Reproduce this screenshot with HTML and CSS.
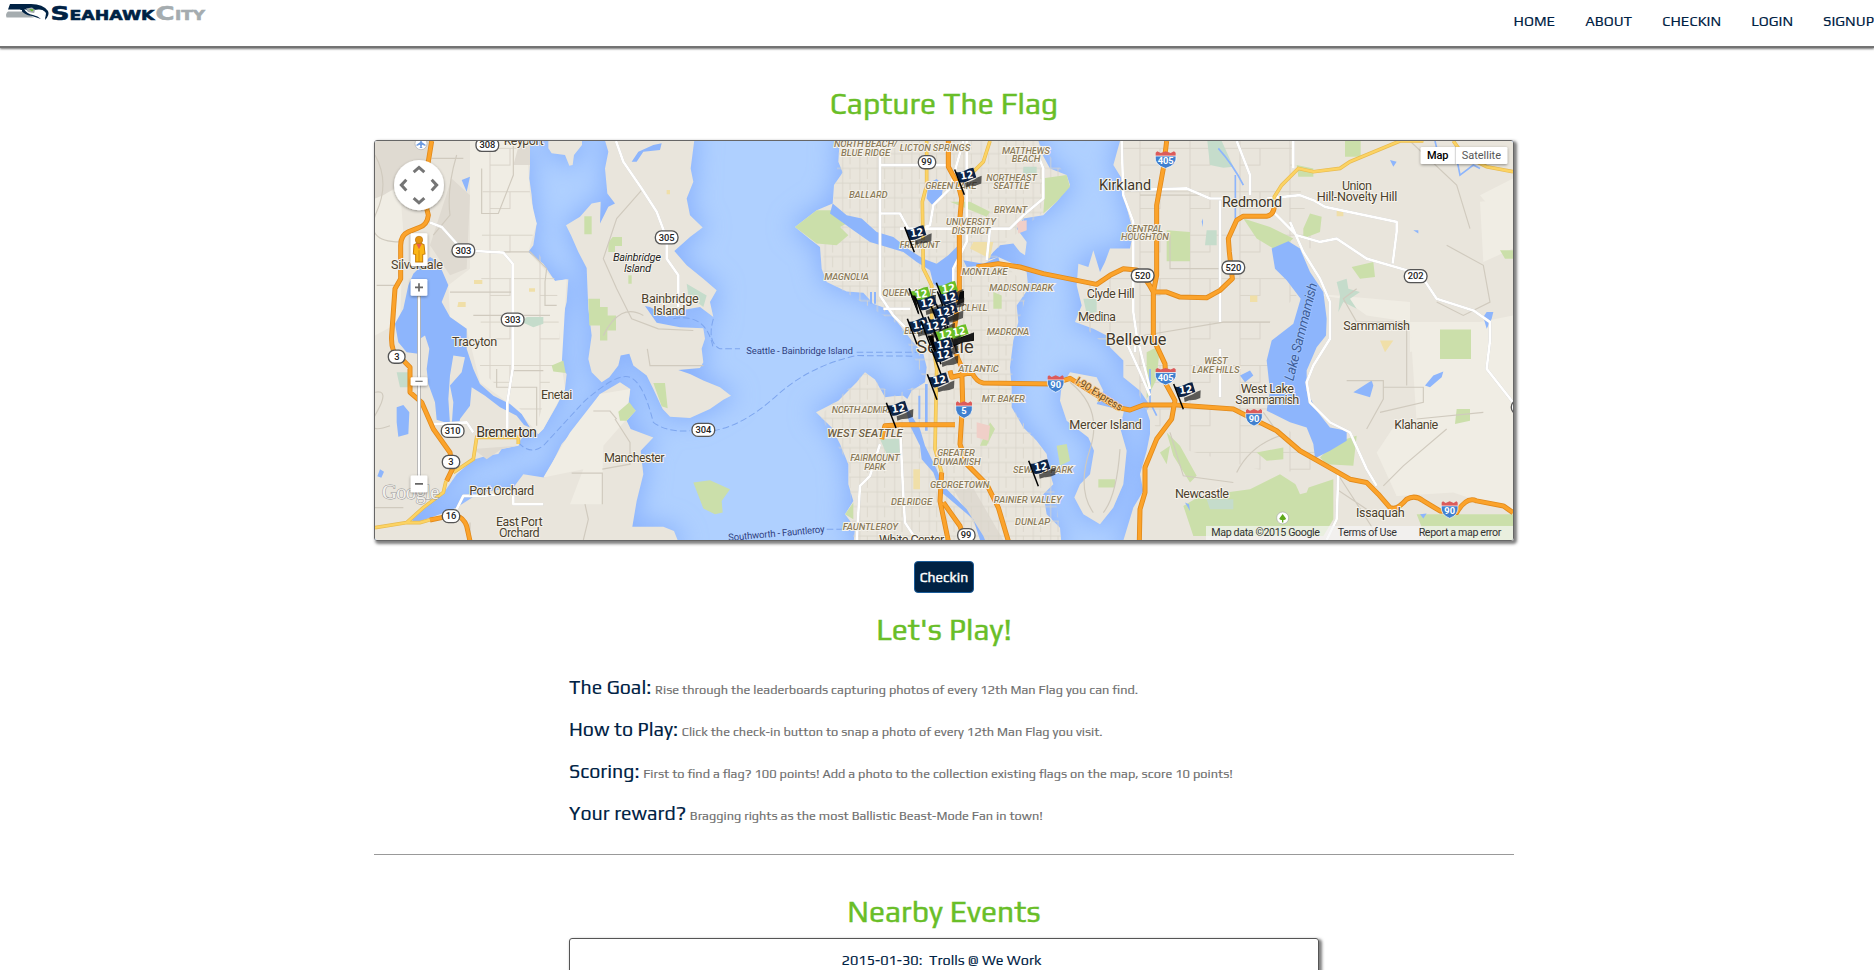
FILE: index.html
```html
<!DOCTYPE html>
<html lang="en">
<head>
<meta charset="utf-8">
<title>SeahawkCity</title>
<link rel="stylesheet" href="styles.css">
</head>
<body>
<header class="topbar">
  <a class="brand">
    <svg width="206" height="24" viewBox="0 0 206 24">
      <path d="M10 4H31Q43 4 48 11 50 15 45 20 46 15 43 14L28 11 26 9.500H8Z" fill="#002244"/>
      <path d="M8 11.500H22L28 14 34 17.500H6.500Q5 14 8 11.500Z" fill="#a5acaf"/>
      <path d="M20 9Q24 15 32 16L41 19Q38 16 33 15 27 14 24 9Z" fill="#002244"/>
      <path d="M9 10.500H22" stroke="#fff"/>
      <path d="M26 8.500L32 7.500 36 10.500 34 13 28 12Z" fill="#a5acaf"/>
      <path d="M29 9L34 9.500 32 11.500Z" fill="#69be28"/>
      <path d="M35 9.500Q43 8 46 13L45.500 17Q43 13.500 37 14.500L34 14Z" fill="#fff"/>
      <path d="M35 9.200Q43 7.500 46.500 12" fill="none" stroke="#002244" stroke-width="1.200"/>
      <text class="wordmark" y="20"><tspan x="60" class="wm-big" textLength="19" lengthAdjust="spacingAndGlyphs">S</tspan><tspan x="112" class="wm-small" textLength="85" lengthAdjust="spacingAndGlyphs">EAHAWK</tspan></text>
      <text class="wordmark wm-gray" y="20"><tspan x="165" class="wm-big" textLength="19" lengthAdjust="spacingAndGlyphs">C</tspan><tspan x="190" class="wm-small" textLength="30" lengthAdjust="spacingAndGlyphs">ITY</tspan></text>
    </svg>
  </a>
  <nav class="menu"><a>HOME</a><a>ABOUT</a><a>CHECKIN</a><a>LOGIN</a><a>SIGNUP</a></nav>
</header>

<main class="container">
  <h1 class="title title-map">Capture The Flag</h1>
  <div class="map">
    <svg class="map-canvas" viewBox="15 18 3414 1194" preserveAspectRatio="none">
      <defs>
        <filter id="soft" x="-5%" y="-5%" width="110%" height="110%"><feGaussianBlur stdDeviation="36"/></filter>
        <filter id="drop" x="-30%" y="-30%" width="160%" height="160%"><feDropShadow dx="0" dy="3" stdDeviation="4" flood-opacity=".4"/></filter>
        <pattern id="grid" width="52" height="44" patternUnits="userSpaceOnUse"><path d="M0 12H52M14 0V44M36 12V44" fill="none" stroke="#dad5ca" stroke-width="2.500"/></pattern>
        <pattern id="grid2" width="150" height="130" patternUnits="userSpaceOnUse"><path d="M0 40H150M60 0V130M60 90H120V40" fill="none" stroke="#d9d4c9" stroke-width="3"/></pattern>
        <g id="land">
          <path d="M0 0H380L395 35 430 45 470 45 480 90 478 130 485 180 490 240 500 265 490 330 475 350 520 385 555 437 595 432 590 500 580 540 575 640 565 690 590 715 585 760 560 810 520 880 505 895 475 880 450 915 446 930 395 940 385 955 350 960 310 972 260 1015 218 1075 160 1115 118 1150 140 1160 210 1135 260 1115 330 1070 430 1055 460 1015 522 1025 545 985 575 925 610 885 650 835 690 775 750 740 781 760 775 805 797 825 770 855 782 880 850 905 812 945 820 1015 800 1095 787 1172 880 1172 912 1185 930 1230H0Z"/>
          <path d="M535 0V40L545 55 585 60 598 92 608 90 612 60 636 30V0Z"/>
          <path d="M700 0L715 50 705 100 712 175 735 205 715 215 690 265 692 200 665 205 630 245 588 270 603 300 625 350 650 398 652 450 655 520 665 600 655 670 665 710 695 740 718 725 745 690 752 660 778 655 790 690 830 720 850 760 878 820 900 843 960 847 1020 820 1060 792 1083 780 1050 755 1000 735 960 715 925 703 990 697 1000 680 995 640 1005 610 1000 578 930 575 860 562 825 512 840 515 890 545 930 525 990 515 1030 545 1020 500 1040 465 1000 430 950 390 913 347 960 305 998 277 960 240 950 190 970 140 962 100 975 0Z"/>
          <path d="M1410 0L1405 80 1418 112 1392 150 1388 205 1340 225 1275 275 1320 312 1350 335 1355 400 1370 440 1430 468 1480 472 1510 505 1550 520 1590 570 1625 615 1660 655 1670 695 1665 740 1625 765 1612 790 1600 780 1568 782 1545 785 1515 732 1485 710 1460 740 1405 795 1338 830 1385 875 1410 925 1435 985 1435 1045 1450 1095 1425 1135 1455 1175 1450 1230H2075L2070 1175 2030 1135 2020 1075 2050 1045 2040 1015 2030 955 2000 915 1960 875 1925 815 1925 755 1920 695 1930 615 1945 560 1940 510 1975 460 1970 410 1930 385 1885 365 1850 375 1870 350 1890 330 1930 325 1950 350 1965 360 1970 320 1940 280 1960 250 2020 240 2060 200 2100 150 2090 120 2040 100 2018 60 2000 0Z"/>
          <path d="M2255 0L2230 90 2255 130 2260 180 2290 290 2280 340 2220 340 2205 380 2190 410 2170 345 2155 395 2125 385 2120 450 2135 510 2115 560 2170 580 2210 600 2220 635 2260 675 2260 725 2310 765 2340 810 2330 825 2340 855 2340 895 2330 945 2310 1015 2320 1065 2290 1115 2255 1230H3450V0Z"/>
          <path d="M2075 750L2100 710 2180 725 2200 765 2180 805 2262 825 2250 875 2270 945 2260 1045 2230 1115 2190 1165 2140 1135 2113 1085 2130 1045 2160 1015 2172 945 2155 905 2090 855 2070 795Z"/>
        </g>
      </defs>
      <rect width="3450" height="1240" fill="#afd0ff"/>
      <use href="#land" fill="#8ab2fd" stroke="#8ab2fd" stroke-width="22" filter="url(#soft)"/>
      <use href="#land" fill="#e9e5dc"/>

      <!-- lighter rural areas -->
      <g fill="#f0ede4">
        <path d="M300 18H470L480 180 500 265 475 350 555 437 590 432 575 690 585 760 520 880 505 895 440 820 330 740 290 580 240 545 235 450 300 400Z"/>
        <path d="M15 180L90 160 100 290 90 560 15 600ZM690 775L780 760 770 850 700 930 695 1105 600 1105 640 1000 520 1025 600 890Z"/>
        <path d="M2780 470L2920 490 2990 540 3120 560 3140 730 3210 850 3080 860 3020 950 3080 1080 3250 1070 3429 1130V300L3330 180 3429 130V540L3330 560 3120 650 3120 500Z"/>
        <path d="M3120 560H3429V1130L3240 1060 3080 1080 3060 950 3140 860Z"/>
        <path d="M3330 200L3429 190V340L3340 380Z"/>
      </g>
      <g fill="#dfdad1">
        <path d="M15 18H190L170 100 40 180 15 190ZM245 130L300 180 290 400 240 420 180 330ZM310 940L440 930 395 940 350 970Z"/>
        <path d="M1750 1060L1800 1040 1900 1212 1840 1212ZM450 18H480V90H430Z"/>
      </g>
      <path d="M1410 18H2000L2090 120 2060 200 1870 350 1975 460 1930 615 1925 815 2030 955 2050 1045 2075 1212H1450L1435 985 1350 840 1485 710 1570 780 1665 740 1590 570 1360 430 1360 340 1390 200Z" fill="url(#grid)"/>
      <path d="M2255 18H2760L2830 340 2700 330 2780 480 2700 560 2690 830 2900 1000 2700 1010 2400 930 2340 850 2260 675 2125 560 2130 450 2280 400Z" fill="url(#grid2)"/>
      <path d="M340 18H470L490 330 560 440 570 640 500 870 330 700Z" fill="url(#grid2)"/>

      <!-- parks -->
      <g fill="#cbdfaa">
        <path d="M970 1040L1020 1033 1080 1060 1055 1095 1058 1130 1035 1135 1000 1118Z"/>
        <path d="M1275 275L1340 225 1400 225 1440 260 1410 275 1435 300 1400 330 1340 325ZM2015 130L2090 120 2100 155 2060 200 2020 235 2025 160Z"/>
        <path d="M643 243H665V297H643ZM728 305H756V332H735L735 350H715V322ZM655 490H690V515H713V540H738V585H712V615H690V570H658ZM850 742H885L893 818 875 812ZM745 828L778 800 797 825 770 855 750 855ZM545 690L580 675 587 712 550 708ZM775 420H785V445H775Z"/>
        <path d="M2620 250L2700 275 2770 310 2740 335 2710 340 2660 310ZM2390 285L2460 290V378H2390ZM2780 90L2830 100V125H2785ZM2820 235L2855 245 2850 290 2800 310 2800 280ZM2925 18H2972V65H2925ZM2945 395L3010 380 3015 425 2970 430ZM3390 345H3429V370H3405ZM3210 582H3303V670H3210Z"/>
        <path d="M2490 1080L2640 1060 2730 1015 2800 1060 2890 1030 2890 1150 2860 1200H2470L2440 1110ZM2850 965L2895 920 2960 900 2950 990 2870 985ZM3140 1135L3429 1135V1212H3170ZM2390 890L2430 930 2480 1020 2460 1040 2410 960ZM2660 950L2740 935 2740 970 2690 975Z"/>
        <path d="M1560 920H1580L1545 960ZM2060 930L2090 925 2100 975 2070 990ZM1425 1135L1450 1100V1150ZM2185 1030H2235V1055H2185ZM1860 860L1875 880 1850 930 1830 930ZM1870 470L1895 480V520H1870ZM1740 200H1800L1860 230 1850 245ZM3260 820H3300V855L3255 865ZM2390 985L2370 950 2400 930ZM2330 650L2370 630 2360 730 2330 790Z"/>
      </g>
      <path d="M2770 1030L2800 1005 2825 1030 2810 1070 2790 1075Z" fill="#e9e5dc"/>
      <g fill="#c5dccb">
        <path d="M2512 18H2555L2590 95 2560 98 2520 90ZM470 545H520V565L490 575 455 560ZM1530 910H1590V950L1550 955ZM2900 440L2930 430 2935 460 2970 470 2940 490 2960 520 2920 500 2905 530 2910 480ZM2510 1090H2590V1120H2520ZM950 445L1010 480 1000 515 955 480Z"/>
        <path d="M80 710H115V755H90ZM2140 490H2180V530L2150 535ZM2510 285H2540V330H2505ZM1960 95H2000V120H1960Z"/>
      </g>
      <g fill="#f0dfa8"><path d="M890 165h10v12h-10zM265 500h22v15h-25zM312 434h25v12h-25zM477 459h18v10h-18zM1810 320h60l-10 50-60-30zM1630 1000h20v60h-20zM2900 225h20v18h-20zM3030 615h40l-25 35zM2640 480h22v20h-22z"/></g>
      <path d="M1940 260l30-5v30l-25 10zM1820 860l40 10-5 45-35-10z" fill="#f0cfc8"/>

      <!-- lakes, canals, inlets -->
      <g fill="#8db5fc">
        <path d="M180 365L205 380 235 450 215 500 240 545 290 580 290 640 310 700 330 745 370 780 420 805 455 835 480 875 462 868 440 840 390 815 345 780 305 755 300 810 270 850 265 880 245 870 250 800 240 750 275 710 285 665 250 660 240 720 235 790 240 865 200 852 195 800 175 745 170 700 178 640 165 600 150 610 145 655 110 650 85 620 75 565 100 520 115 450 130 415Z"/>
        <path d="M80 815L100 808 118 830 115 895 85 903 80 860ZM275 135L300 125 290 170ZM30 1000l12 8-8 18-12-5ZM785 80L805 50 850 30 875 25 870 45 820 50 800 80Z"/>
        <path d="M1388 205L1430 240 1475 250 1520 290 1570 305 1620 345 1660 370 1700 385 1735 360 1765 330 1775 345 1750 400 1755 445 1720 470 1690 445 1680 405 1640 380 1600 350 1550 335 1500 320 1450 285 1380 235ZM1675 145L1700 132 1720 150 1715 185 1690 213 1670 190Z"/>
        <path d="M1780 375L1840 385 1885 365 1890 385 1790 395Z"/>
        <path d="M1600 790L1625 840 1650 880 1665 930 1700 1000 1720 1050 1790 1120 1840 1200 1845 1212H1830L1810 1150 1710 1065 1690 1010 1655 970 1650 930 1620 870Z"/>
        <path d="M1665 745h8v140h-8zM1645 780h6v70h-6zM1500 470h6v35h-6zM1512 470h6v35h-6z"/>
        <path d="M2705 340L2755 318 2790 340 2820 410 2860 470 2870 550 2868 600 2840 635 2810 705 2810 765 2840 825 2880 875 2930 885 2930 915 2880 945 2835 967 2830 925 2810 875 2760 860 2690 825 2700 765 2690 675 2705 615 2770 565 2792 490 2750 435 2715 400Z"/>
        <path d="M3340 545L3350 530 3370 530 3365 550 3350 580ZM2950 770L3005 735 3010 750 3000 785ZM3165 750L3190 720 3220 708 3215 725 3180 755ZM2610 720L2640 705 2650 720 2625 740ZM3150 1135l20-2-10 15ZM3130 285l15 0 0 10Z"/>
        <path d="M2445 1100l12 5 3 20ZM3060 75l20 5-10 15ZM2495 260l4-10v25Z"/>
      </g>
      <path d="M3195 18L3210 80 3260 70 3270 120 3310 90 3330 100M2545 40Q2590 90 2620 150M2596 120V250M2340 700V800L2360 840" fill="none" stroke="#8db5fc" stroke-width="5"/>

      <!-- minor roads -->
      <g class="lane">
        <path d="M15 60Q60 140 20 230T90 320M185 70H280M260 60Q230 160 240 240L190 300M335 100V235H385L430 120V18M240 470H425M240 350H480L530 400 525 440V510H560M20 450H90M310 540H540M380 700V755H500V870M430 705H520M15 770Q60 760 20 830T60 870M15 1115H100M300 1160V1212M605 1012H697V1105M670 826H720L740 850M645 1105L655 1150 640 1212M697 1000L780 985V920L735 850"/>
        <path d="M815 165L740 250 700 370 740 460 785 550 865 580 970 585M832 640L840 690 1000 690M700 600Q750 500 820 540"/>
        <path d="M2310 180H2500M2310 300H2400L2400 400H2550M2700 560H2560L2320 600M2960 460L2920 490 2960 560H3110V750M2930 735H3040V790L2990 880M3040 755H3160V800L3030 830M3230 330L3340 390 3360 500 3280 540 3200 500M3120 18L3260 150 3300 280M3230 880L3100 990 3040 1050M2400 890L2440 1020 2590 1040M2600 1010Q2640 930 2730 900L2680 830M2900 1010L3010 1180M3140 850L3340 830M2900 1060L2990 1120"/>
        <path d="M2100 740Q2200 820 2160 940T2170 1130M2250 940Q2240 1080 2200 1130"/>
      </g>
      <g class="street">
        <path d="M738 18L760 80 815 160 860 230 890 310 890 370 925 420V515"/>
        <path d="M180 262L215 275 260 325 280 345 400 352 428 385V700L412 800V880M190 865L290 860 310 890M260 1120L280 1080H340L430 1070V1105H520"/>
        <path d="M1530 18V480L1570 540 1620 590M1530 90H1730M1530 235H1590L1620 290 1680 270 1690 210 1740 160 1780 18M1790 18V320L1750 400V450M1590 280H1920L1960 240 2020 190V100L2000 50M1850 375L1860 280M1540 520H1620M1530 925L1500 1020 1470 1050 1460 1212M1590 870L1600 1080 1605 1160 1640 1212"/>
        <path d="M2255 18L2260 180 2290 260V530L2300 600 2340 760M2282 165L2450 160 2520 190H2560M2600 18L2640 120V180M2770 18V100M2550 195V560M2690 190L2790 180 2830 195 2865 215 3080 260V290L3068 385M2710 230L2780 300 2850 320 2900 310 2990 370 3110 405 3160 430 3200 490 3310 525 3360 560V615L3350 700 3429 800M2760 260L2800 350 2850 430 2880 500V610L2830 690 2810 740 2820 800 2880 860 2940 890 2990 1000 3020 1050M2550 640V785M2905 1010L2900 1150 2870 1212M2260 600L2310 710 2340 780M2295 620V650"/>
      </g>
      <path d="M445 920Q480 960 520 930L640 800Q740 710 780 725T850 860Q890 890 960 885M1030 885Q1120 870 1220 780T1460 660L1630 662M1030 550Q1010 620 1050 640H1110M1460 650H1640M910 550Q1010 530 1030 640M1370 1180H1450" class="ferry"/>

      <!-- highways -->
      <g class="yellow-edge"><path id="y1" d="M228 1035L220 1070 160 1115 110 1160 15 1175M110 1160H150L185 1150M250 1010L310 970 320 905H445V925"/><path id="y2" d="M1670 18V150L1657 200 1660 400 1685 450V600L1700 700 1695 940 1715 1010M1860 18L1840 80 1800 120 1775 150M2713 200V185L2735 150 2785 100 2830 110 2910 100 2940 80 3090 18H3160M3250 18L3280 60 3350 95 3429 110"/></g>
      <g class="yellow"><use href="#y1"/><use href="#y2"/></g>
      <g class="hwy-edge"><path d="M185 18L175 80 160 180 175 240Q172 270 145 278L115 290Q92 300 92 330V430L75 460 65 600Q62 650 85 660L120 695V770L155 800 190 880 240 950 247 1000 230 1035M180 1152L215 1145 260 1140Q280 1145 290 1170L300 1215M1735 18V95L1765 150 1775 190 1768 270V480L1750 600 1762 665 1775 695 1778 800 1770 925 1790 985 1850 1045 1885 1115 1915 1215M1820 395L1885 385 1950 395 2020 415 2180 447 2220 420 2260 400 2300 404Q2330 430 2350 470L2390 470 2430 485 2510 487 2550 465 2587 430 2578 350 2575 310 2600 255 2620 243H2690Q2710 240 2713 215M2390 18L2380 100 2360 210V420L2350 470V610L2385 685 2388 745 2415 795 2405 850 2360 910 2325 995V1070L2310 1120 2308 1215M1740 705L1745 725 1805 710Q1820 740 1840 742L2050 745 2100 728 2150 760 2240 815 2280 823 2320 808 2410 807 2590 820 2630 840 2720 885 2790 945 2940 1030 2990 1040 3025 1075 3060 1115Q3080 1125 3110 1090 3135 1075 3160 1095L3210 1125 3260 1130Q3290 1080 3320 1095L3400 1110 3429 1130M1535 910L1545 870 1590 867H1755M1715 1010L1710 1095 1735 1215M1720 1100L1770 1170 1780 1200"/></g>
      <path class="hwy" d="M185 18L175 80 160 180 175 240Q172 270 145 278L115 290Q92 300 92 330V430L75 460 65 600Q62 650 85 660L120 695V770L155 800 190 880 240 950 247 1000 230 1035M180 1152L215 1145 260 1140Q280 1145 290 1170L300 1215M1735 18V95L1765 150 1775 190 1768 270V480L1750 600 1762 665 1775 695 1778 800 1770 925 1790 985 1850 1045 1885 1115 1915 1215M1820 395L1885 385 1950 395 2020 415 2180 447 2220 420 2260 400 2300 404Q2330 430 2350 470L2390 470 2430 485 2510 487 2550 465 2587 430 2578 350 2575 310 2600 255 2620 243H2690Q2710 240 2713 215M2390 18L2380 100 2360 210V420L2350 470V610L2385 685 2388 745 2415 795 2405 850 2360 910 2325 995V1070L2310 1120 2308 1215M1740 705L1745 725 1805 710Q1820 740 1840 742L2050 745 2100 728 2150 760 2240 815 2280 823 2320 808 2410 807 2590 820 2630 840 2720 885 2790 945 2940 1030 2990 1040 3025 1075 3060 1115Q3080 1125 3110 1090 3135 1075 3160 1095L3210 1125 3260 1130Q3290 1080 3320 1095L3400 1110 3429 1130M1535 910L1545 870 1590 867H1755M1715 1010L1710 1095 1735 1215M1720 1100L1770 1170 1780 1200"/>

      <!-- place names -->
      <g class="town">
        <text x="461" y="30" textLength="120">Keyport</text><text x="141" y="402" textLength="156">Silverdale</text><text x="314" y="632" textLength="136">Tracyton</text><text x="900" y="504" textLength="172">Bainbridge</text><text x="898" y="539" textLength="96">Island</text>
        <text x="560" y="789" textLength="94">Enetai</text><text x="793" y="978" textLength="182">Manchester</text><text x="395" y="1077" textLength="195">Port Orchard</text><text x="448" y="1170" textLength="140">East Port</text><text x="448" y="1203" textLength="122">Orchard</text>
        <text x="2222" y="487" textLength="144">Clyde Hill</text><text x="2181" y="556" textLength="114">Medina</text><text x="2207" y="881" textLength="218">Mercer Island</text><text x="2961" y="165" textLength="90">Union</text><text x="2961" y="197" textLength="242">Hill-Novelty Hill</text><text x="3020" y="585" textLength="200">Sammamish</text>
        <text x="2692" y="771" textLength="160">West Lake</text><text x="2692" y="804" textLength="192">Sammamish</text><text x="3139" y="879" textLength="132">Klahanie</text><text x="2496" y="1087" textLength="162">Newcastle</text><text x="3031" y="1144" textLength="146">Issaquah</text><text x="1625" y="1224" textLength="196">White Center</text>
      </g>
      <g class="city"><text x="410" y="904" textLength="182">Bremerton</text><text x="2265" y="165" textLength="156">Kirkland</text><text x="2646" y="217" textLength="180">Redmond</text></g>
      <g class="city bellevue"><text x="2298" y="630" textLength="182">Bellevue</text></g>
      <text class="city seattle" x="1725" y="653" textLength="172">Seattle</text>
      <g class="isle"><text x="801" y="378" textLength="144">Bainbridge</text><text x="803" y="410" textLength="82">Island</text></g>
      <g class="hood">
        <text x="1487" y="37" textLength="190">NORTH BEACH/</text><text x="1487" y="63" textLength="148">BLUE RIDGE</text><text x="1695" y="49" textLength="212">LICTON SPRINGS</text><text x="1968" y="56" textLength="144">MATTHEWS</text><text x="1968" y="82" textLength="86">BEACH</text><text x="1925" y="137" textLength="152">NORTHEAST</text><text x="1924" y="163" textLength="108">SEATTLE</text><text x="1743" y="163" textLength="154">GREEN LAKE</text><text x="1495" y="190" textLength="116">BALLARD</text><text x="1922" y="232" textLength="100">BRYANT</text><text x="1803" y="268" textLength="150">UNIVERSITY</text><text x="1803" y="295" textLength="116">DISTRICT</text><text x="1649" y="337" textLength="120">FREMONT</text><text x="1430" y="433" textLength="134">MAGNOLIA</text><text x="1618" y="481" textLength="162">QUEEN ANNE</text><text x="1844" y="418" textLength="138">MONTLAKE</text><text x="1954" y="466" textLength="192">MADISON PARK</text><text x="1782" y="526" textLength="142">CAPITOL HILL</text><text x="1914" y="599" textLength="128">MADRONA</text><text x="1660" y="595" textLength="114">BELLTOWN</text><text x="2325" y="289" textLength="108">CENTRAL</text><text x="2325" y="315" textLength="144">HOUGHTON</text>
        <text x="1826" y="709" textLength="122">ATLANTIC</text><text x="1900" y="799" textLength="130">MT. BAKER</text><text x="1485" y="832" textLength="200">NORTH ADMIRAL</text><text x="1758" y="961" textLength="114">GREATER</text><text x="1761" y="988" textLength="142">DUWAMISH</text><text x="1515" y="976" textLength="148">FAIRMOUNT</text><text x="1515" y="1003" textLength="64">PARK</text><text x="1769" y="1057" textLength="178">GEORGETOWN</text><text x="1625" y="1108" textLength="124">DELRIDGE</text><text x="2019" y="1012" textLength="180">SEWARD PARK</text><text x="1973" y="1101" textLength="204">RAINIER VALLEY</text><text x="1988" y="1168" textLength="106">DUNLAP</text><text x="1501" y="1183" textLength="166">FAUNTLEROY</text><text x="2538" y="684" textLength="70">WEST</text><text x="2538" y="711" textLength="142">LAKE HILLS</text>
        <text class="hood-big" x="1485" y="904" textLength="226">WEST SEATTLE</text>
      </g>
      <g class="ferry-name"><text x="1289" y="656" textLength="320">Seattle - Bainbridge Island</text><text x="1220" y="1202" textLength="290" transform="rotate(-5 1220 1202)">Southworth - Fauntleroy</text></g>
      <text class="lake" x="2806" y="592" textLength="300" transform="rotate(-76 2806 592)">Lake Sammamish</text>
      <text class="express" x="2182" y="784" textLength="160" transform="rotate(32 2182 784)">I-90 Express</text>

      <!-- route shields -->
      <g class="route">
        <g><rect x="318" y="11" width="68" height="38" rx="17"/><text x="352" y="40">308</text></g><g><rect x="246" y="326" width="68" height="39" rx="18"/><text x="280" y="355">303</text></g><g><rect x="394" y="533" width="68" height="39" rx="18"/><text x="428" y="562">303</text></g><g><rect x="856" y="287" width="68" height="39" rx="18"/><text x="890" y="316">305</text></g><g><rect x="55" y="644" width="50" height="39" rx="18"/><text x="81" y="673">3</text></g><g><rect x="214" y="866" width="68" height="39" rx="18"/><text x="248" y="895">310</text></g><g><rect x="217" y="959" width="52" height="39" rx="18"/><text x="243" y="988">3</text></g><g><rect x="217" y="1121" width="52" height="39" rx="18"/><text x="243" y="1150">16</text></g><g><rect x="966" y="863" width="68" height="39" rx="18"/><text x="1000" y="892">304</text></g><g><rect x="1645" y="62" width="52" height="39" rx="18"/><text x="1670" y="91">99</text></g><g><rect x="2284" y="401" width="68" height="39" rx="18"/><text x="2318" y="430">520</text></g><g><rect x="2556" y="377" width="68" height="39" rx="18"/><text x="2590" y="406">520</text></g><g><rect x="3103" y="403" width="68" height="39" rx="18"/><text x="3137" y="432">202</text></g><g><rect x="1763" y="1178" width="52" height="39" rx="18"/><text x="1788" y="1207">99</text></g><rect x="3424" y="795" width="68" height="39" rx="18"/>
      </g>
      <defs><g id="inter"><path d="M-24-22L-20-26-12-21 0-26 12-21 20-26 24-22V-12H-24Z" fill="#dc5b5b"/><path d="M-25-12H25Q28 15 0 25-28 15-25-12Z" fill="#4080cf" stroke="#fff" stroke-width="2"/></g></defs>
      <g class="inter">
        <g transform="translate(2387 75)"><use href="#inter" transform="scale(1.25 1)"/><text y="12">405</text></g><g transform="translate(2387 723)"><use href="#inter" transform="scale(1.250 1)"/><text y="12">405</text></g><g transform="translate(2057 745)"><use href="#inter"/><text y="12">90</text></g><g transform="translate(1782 823)"><use href="#inter"/><text y="12">5</text></g><g transform="translate(2652 846)"><use href="#inter"/><text y="12">90</text></g><g transform="translate(3239 1122)"><use href="#inter"/><text y="12">90</text></g>
      </g>
      <circle cx="2738" cy="1146" r="18" fill="#fff" stroke="#aaa" stroke-width="2"/><path d="M2738 1134l10 14q0 5-8 4v8h-4v-8q-8 1-8-4z" fill="#5fa91c"/>
      <circle cx="153" cy="26" r="18" fill="#fff" stroke="#aaa" stroke-width="2"/><path d="M153 12l3 10 11 7-1 4-10-4-1 6 3 4h-10l3-4-1-6-10 4-1-4 11-7z" fill="#6d9be0"/>

      <!-- 12th Man flags -->
      <defs>
        <g id="shade"><path d="M32 41Q50 35 60 30 70 22 82 19L81 42Q66 50 48 49L34 54Z" fill="#222" fill-opacity=".72"/></g>
        <g id="pole"><path d="M1 0L30 76" stroke="#000" stroke-width="4.500"/></g>
        <g id="cloth"><path d="M4 8Q18 11 32 3T57-5L66 24Q54 27 42 34T18 39Z"/></g>
        <g id="navy"><use href="#shade"/><use href="#cloth" fill="#0b2347"/><use href="#pole"/><text class="twelve" x="37" y="28" textLength="40" lengthAdjust="spacingAndGlyphs" transform="rotate(-9 37 17)">12</text></g>
        <g id="green"><use href="#shade"/><use href="#cloth" fill="#69be28"/><use href="#pole"/><text class="twelve" x="37" y="28" textLength="40" lengthAdjust="spacingAndGlyphs" transform="rotate(-9 37 17)">12</text></g>
      </defs>
      <use href="#navy" x="1753" y="103"/><use href="#navy" x="1603" y="275"/>
      <use href="#green" x="1698" y="442"/><use href="#green" x="1616" y="459"/><path d="M1770 470L1782 466V500L1760 510ZM1622 480L1636 480 1648 540Z" fill="#0a0a0a"/><use href="#navy" x="1701" y="468"/><use href="#navy" x="1635" y="485"/>
      <use href="#navy" x="1698" y="506"/><use href="#navy" x="1683" y="513"/><use href="#navy" x="1673" y="543"/><use href="#navy" x="1611" y="550"/><use href="#navy" x="1651" y="555"/>
      <path d="M1750 612L1812 592V616L1780 620 1750 634ZM1672 600L1690 600 1700 670Z" fill="#050505"/>
      <use href="#green" x="1730" y="571"/><use href="#green" x="1690" y="580"/><use href="#navy" x="1683" y="610"/><use href="#navy" x="1683" y="640"/><use href="#navy" x="1671" y="716"/>
      <use href="#navy" x="1548" y="801"/><use href="#navy" x="1975" y="975"/><use href="#navy" x="2410" y="745"/>

      <!-- pan, street view and zoom controls -->
      <text class="google" x="122" y="1090" textLength="172">Google</text>
      <g filter="url(#drop)"><circle cx="147" cy="150" r="75" fill="#fff"/></g>
      <path d="M131 111L147 97 163 111M131 189L147 203 163 189M109 134L94 150 109 166M185 134L200 150 185 166" fill="none" stroke="#757575" stroke-width="9"/>
      <rect x="122" y="294" width="50" height="98" rx="4" fill="#fff" filter="url(#drop)"/>
      <path d="M132 328Q147 318 162 328L165 356 158 358V380H137V358L130 356Z" fill="#fbb615" stroke="#c67c08" stroke-width="3"/><path d="M139 326H155L147 342Z" fill="#e8604c"/><path d="M147 345V380" stroke="#c67c08" stroke-width="2"/><circle cx="147" cy="314" r="11" fill="#e59410" stroke="#b96e06" stroke-width="2"/>
      <rect x="142" y="482" width="10" height="540" fill="#fff" stroke="#999" stroke-width="2"/>
      <g filter="url(#drop)"><rect x="122" y="431" width="50" height="50" rx="4" fill="#fff"/><rect x="122" y="1019" width="50" height="50" rx="4" fill="#fff"/><rect x="122" y="725" width="50" height="25" rx="4" fill="#fff"/></g>
      <path d="M135 456H159M147 444V468M135 1044H159" stroke="#666" stroke-width="5"/><path d="M136 737H158" stroke="#555" stroke-width="3"/>

      <!-- map type switch and legal strip -->
      <g filter="url(#drop)"><rect x="3152" y="36" width="260" height="51" rx="4" fill="#fff"/></g><path d="M3256 36V87" stroke="#bbb" stroke-width="2"/>
      <text class="type type-on" x="3203" y="73" textLength="64">Map</text><text class="type" x="3334" y="73" textLength="118">Satellite</text>
      <rect x="2508" y="1170" width="921" height="42" fill="#f5f5f5" fill-opacity=".7"/>
      <g class="legal"><text x="2687" y="1201" textLength="326">Map data ©2015 Google</text><text x="2992" y="1201" textLength="178">Terms of Use</text><text x="3270" y="1201" textLength="248">Report a map error</text></g>
    </svg>
  </div>
  <div class="action"><button class="checkin">Checkin</button></div>
  <h2 class="title title-play">Let's Play!</h2>
  <section class="rules">
    <p class="rule"><span class="term">The Goal:</span> <span class="detail">Rise through the leaderboards capturing photos of every 12th Man Flag you can find.</span></p>
    <p class="rule"><span class="term">How to Play:</span> <span class="detail">Click the check-in button to snap a photo of every 12th Man Flag you visit.</span></p>
    <p class="rule"><span class="term">Scoring:</span> <span class="detail">First to find a flag? 100 points! Add a photo to the collection existing flags on the map, score 10 points!</span></p>
    <p class="rule"><span class="term">Your reward?</span> <span class="detail">Bragging rights as the most Ballistic Beast-Mode Fan in town!</span></p>
  </section>
  <hr class="divider">
  <h2 class="title title-events">Nearby Events</h2>
  <div class="events"><a class="event">2015-01-30:&nbsp; Trolls @ We Work</a></div>
</main>
</body>
</html>
```
FILE: styles.css
```css
* { box-sizing: border-box; }
html, body { height: 100%; }
body { margin: 0; overflow: hidden; background: #fff; color: #002244; font-family: Play, Roboto, "Liberation Sans", sans-serif; -webkit-text-stroke: .12px; }
.topbar { height: 48px; display: flex; justify-content: space-between; border-bottom: 2px solid #737373; box-shadow: 0 1px 2px rgba(0, 0, 0, .55); }
.brand { display: block; height: 24px; }
.brand svg { display: block; }
.wordmark { font-family: "DejaVu Sans", sans-serif; font-weight: bold; fill: #002244; stroke: #002244; stroke-width: .6px; text-anchor: middle; }
.wm-gray { fill: #a5acaf; stroke: #a5acaf; }
.wm-big { font-size: 20px; }
.wm-small { font-size: 14.5px; }
.menu { display: flex; gap: 30px; padding-top: 12px; font-size: 14.7px; line-height: 18px; }

.container { width: 1140px; margin: 0 auto 0 374px; }
.title { margin: 0; color: #69be28; font-size: 30px; font-weight: 400; line-height: 36px; text-align: center; -webkit-text-stroke: .4px; }
.title-map { padding-top: 38px; margin-bottom: 18px; }
.map { height: 401px; border: 1px solid #666; border-radius: 3px; box-shadow: 2px 2px 3px 1px rgba(0, 0, 0, .5); overflow: hidden; }
.map-canvas { display: block; width: 100%; height: 100%; }
.map-canvas text { font-family: Roboto, sans-serif; text-anchor: middle; paint-order: stroke; -webkit-text-stroke: 0; }
.lane { fill: none; stroke: #d0cabe; stroke-width: 3.5; }
.street { fill: none; stroke: #fff; stroke-width: 8; stroke-linejoin: round; filter: drop-shadow(0 0 1px #bbb); }
.ferry { fill: none; stroke: #7da5ee; stroke-width: 3; stroke-dasharray: 20 9; }
.yellow-edge { fill: none; stroke: #e8bb50; stroke-width: 11; }
.yellow { fill: none; stroke: #fcd363; stroke-width: 7; }
.hwy-edge { fill: none; stroke: #e28a1b; stroke-width: 15; stroke-linejoin: round; }
.hwy { fill: none; stroke: #fba32b; stroke-width: 10; stroke-linejoin: round; }
.map-canvas .town text { font-size: 38px; fill: #4c412d; stroke: #f5f2eb; stroke-width: 6px; }
.map-canvas .city text, .map-canvas .seattle { font-size: 43px; fill: #40372a; stroke: #f5f2eb; stroke-width: 6px; }
.map-canvas .bellevue text { font-size: 49px; }
.map-canvas .seattle { font-size: 55px; }
.map-canvas .isle text { font-size: 34px; font-style: italic; fill: #222; stroke: #f5f2eb; stroke-width: 6px; }
.map-canvas .hood text { font-size: 29px; font-weight: 500; font-style: italic; fill: #8c7c5b; stroke: #f5f2eb; stroke-width: 6px; }
.map-canvas .hood .hood-big { font-size: 34px; fill: #6e6045; }
.map-canvas .ferry-name text { font-size: 29px; fill: #2f4080; stroke: #afd0ff; stroke-width: 4px; }
.map-canvas .lake { font-size: 41px; font-style: italic; fill: #3d5d99; stroke: #a3c6ff; stroke-width: 4px; }
.map-canvas .express { font-size: 31px; fill: #6b481a; stroke: #f8c986; stroke-width: 6px; }
.route rect { fill: #fff; stroke: #555; stroke-width: 4px; }
.map-canvas .route text { font-size: 28px; font-weight: 500; fill: #222; }
.map-canvas .inter text { font-size: 28px; font-weight: 700; fill: #fff; }
.map-canvas .twelve { font-family: "DejaVu Sans", sans-serif; font-weight: bold; font-size: 31px; fill: #fff; }
.map-canvas .google { font-family: "Liberation Serif", serif; font-size: 62px; fill: #f2f0ec; stroke: #999; stroke-width: 3px; }
.map-canvas .type { font-size: 33px; fill: #565656; }
.map-canvas .type-on { font-weight: 500; fill: #000; }
.map-canvas .legal text { font-size: 32px; fill: #333; }

.action { display: flex; justify-content: center; padding-top: 20px; }
.checkin { width: 60px; height: 32px; padding: 0; border: 1px solid #1a5c9a; border-radius: 4px; background: #002244; color: #fff; font: 400 14px Play, Roboto, sans-serif; -webkit-text-stroke: .35px; }
.title-play { padding-top: 19px; }
.rules { padding: 18px 0 0 195px; }
.rule { margin: 0; height: 42.1px; line-height: 42px; white-space: nowrap; }
.term { font-size: 19.6px; }
.detail { font-size: 12.78px; color: #6e6e6e; }
.divider { height: 1px; margin: 20px 0 0; border: 0; background: #999; }
.title-events { padding-top: 39px; margin-bottom: 8px; }
.events { width: 750px; height: 120px; margin-left: 195px; padding: 11px 5px 0 0; border: 1px solid #555; border-radius: 3px; box-shadow: 2px 2px 3px 1px rgba(0, 0, 0, .5); text-align: center; }
.event { font-size: 14.4px; line-height: 20px; }
```
